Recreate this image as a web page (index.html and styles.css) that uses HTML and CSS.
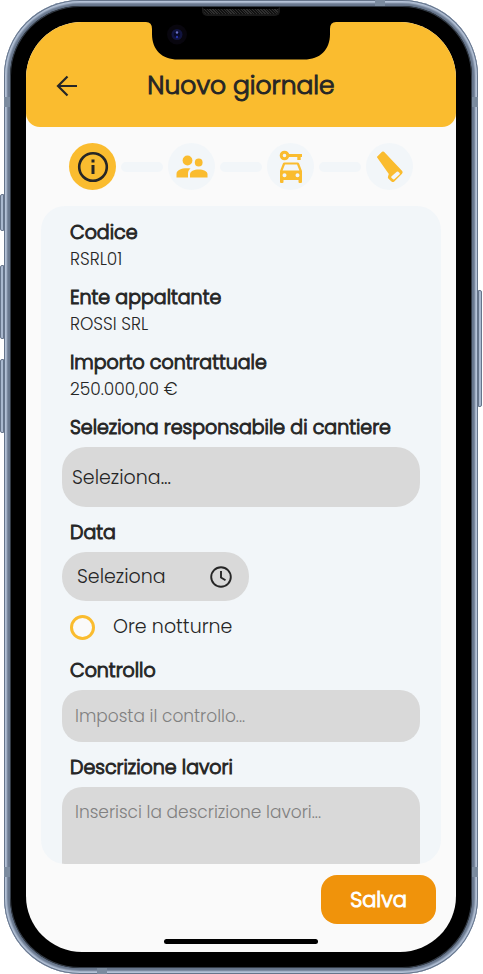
FILE: index.html
```html
<!DOCTYPE html>
<html lang="it">
<head>
    <meta charset="UTF-8">
    <meta name="viewport" content="width=device-width, initial-scale=1.0">
    <title>Nuovo giornale</title>
    <link rel="stylesheet" href="styles.css">
</head>
<body>
    <div class="phone">
        <span class="side-key mute"></span>
        <span class="side-key volume-up"></span>
        <span class="side-key volume-down"></span>
        <span class="side-key power"></span>
        <span class="band band-top"></span>
        <span class="band band-bottom"></span>
        <span class="band band-left-top"></span>
        <span class="band band-left-bottom"></span>
        <span class="band band-right-top"></span>
        <span class="band band-right-bottom"></span>

        <div class="bezel">
            <span class="speaker"></span>
            <div class="screen">
                <svg class="notch" width="190" height="38" viewBox="0 0 190 38" aria-hidden="true">
                    <path d="M0 0H190Q184 0 184 7V12C184 28 174 37.500 158 37.500H32C16 37.500 6 28 6 12V7Q6 0 0 0Z" fill="#000"/>
                    <circle cx="31" cy="12.500" r="10" fill="#08060e"/>
                    <circle cx="31" cy="12.500" r="5.500" fill="#11143f"/>
                    <circle cx="31" cy="12.500" r="3" fill="#080b28"/>
                    <circle cx="31" cy="10.500" r="1.200" fill="#6b72c8"/>
                    <circle cx="31" cy="15" r="1.200" fill="#2733a8"/>
                </svg>

                <header class="header">
                    <button class="back" type="button" aria-label="Indietro">
                        <svg width="22" height="22" viewBox="0 0 22 22" fill="none" stroke="#262626" stroke-width="2.200">
                            <path d="M21 11H2M11.500 1.500L2 11L11.500 20.500"/>
                        </svg>
                    </button>
                    <h1 class="title">Nuovo giornale</h1>
                </header>

                <nav class="steps" aria-label="Passaggi">
                    <a class="step active" href="#info" aria-label="Informazioni">
                        <svg width="32" height="32" viewBox="0 0 32 32">
                            <circle cx="16" cy="16" r="13.800" fill="none" stroke="#262626" stroke-width="2.600"/>
                            <path d="M14.500 8.500h3v3h-3zM14.500 14h3v9h-3z" fill="#262626"/>
                        </svg>
                    </a>
                    <span class="line"></span>
                    <a class="step" href="#persone" aria-label="Persone">
                        <svg width="32" height="24" viewBox="0 0 32 24" fill="#fabc2f">
                            <circle cx="11.500" cy="5.500" r="4.900"/>
                            <circle cx="22.700" cy="7.500" r="3.900"/>
                            <path d="M.5 22.500V19C.5 14.500 7 12.700 14.500 13.500C12.400 15 12 17 12 19V22.500Z"/>
                            <path d="M14 22.500V19.500C14 16 18 14.500 22.700 14.500S31.500 16 31.500 19.500V22.500Z"/>
                        </svg>
                    </a>
                    <span class="line"></span>
                    <a class="step" href="#mezzi" aria-label="Mezzi">
                        <svg width="24" height="34" viewBox="0 0 24 34">
                            <g fill="none" stroke="#fabc2f">
                                <circle cx="5.500" cy="5.500" r="3.300" stroke-width="3"/>
                                <path d="M9 5.500H23" stroke-width="3"/>
                                <path d="M20 5V10" stroke-width="3.400"/>
                            </g>
                            <path fill="#fabc2f" fill-rule="evenodd" d="M5.500 12.500H18.500Q19.700 12.500 20.100 13.600L23 21V32Q23 33 22 33H20.500Q19.500 33 19.500 32V30H4.500V32Q4.500 33 3.500 33H2Q1 33 1 32V21L3.900 13.600Q4.300 12.500 5.500 12.500ZM6 14.500L3.600 20.500H20.400L18 14.500ZM5.500 23.200A2 2 0 1 0 5.500 27.200A2 2 0 1 0 5.500 23.200ZM18.500 23.200A2 2 0 1 0 18.500 27.200A2 2 0 1 0 18.500 23.200Z"/>
                        </svg>
                    </a>
                    <span class="line"></span>
                    <a class="step" href="#attrezzi" aria-label="Attrezzi">
                        <svg width="28" height="32" viewBox="0 0 28 32">
                            <path fill="#fabc2f" fill-rule="evenodd" d="M6 .8L.8 6L12.800 23L12 25.500Q11.500 26.800 12.500 27.800L15.500 30.500Q17 31.700 18.300 30.500L26 22.800Q27.300 21.300 26.200 20L8 .8Q7 0 6 .8ZM22.300 20.700L23.600 22Q24.200 22.800 23.500 23.400L18.300 28.300Q17.500 28.800 16.800 28.100L15.400 26.700Q14.900 26 15.600 25.300L20.800 20.700Q21.600 20.100 22.300 20.700Z"/>
                        </svg>
                    </a>
                </nav>

                <form class="card" id="giornale">
                    <dl class="details">
                        <div>
                            <dt class="label">Codice</dt>
                            <dd class="value">RSRL01</dd>
                        </div>
                        <div>
                            <dt class="label">Ente appaltante</dt>
                            <dd class="value">ROSSI SRL</dd>
                        </div>
                        <div>
                            <dt class="label">Importo contrattuale</dt>
                            <dd class="value">250.000,00 €</dd>
                        </div>
                    </dl>

                    <div class="field">
                        <label class="label" for="responsabile">Seleziona responsabile di cantiere</label>
                        <select class="control select" id="responsabile">
                            <option>Seleziona...</option>
                        </select>
                    </div>

                    <div class="field">
                        <label class="label" for="data">Data</label>
                        <button class="control date" id="data" type="button">
                            Seleziona
                            <svg width="22" height="22" viewBox="0 0 22 22" fill="none" stroke="#262626" stroke-width="1.900">
                                <circle cx="11" cy="11" r="9.800"/>
                                <path d="M11 5V11.500L15.500 14.200"/>
                            </svg>
                        </button>
                    </div>

                    <label class="option">
                        <input class="radio" type="radio" name="notturne">
                        Ore notturne
                    </label>

                    <div class="field">
                        <label class="label" for="controllo">Controllo</label>
                        <input class="control text" id="controllo" type="text" placeholder="Imposta il controllo...">
                    </div>

                    <div class="field">
                        <label class="label" for="descrizione">Descrizione lavori</label>
                        <textarea class="control text area" id="descrizione" placeholder="Inserisci la descrizione lavori..."></textarea>
                    </div>
                </form>

                <footer class="footer">
                    <button class="save" type="submit" form="giornale">Salva</button>
                    <span class="home"></span>
                </footer>
            </div>
        </div>
    </div>
</body>
</html>
```
FILE: styles.css
```css
* {
    box-sizing: border-box;
}
body {
    height: 100vh;
    margin: 0;
    padding: 0 5px 0 4px;
    background-color: #fff;
    font-family: Poppins, Inter, sans-serif;
    font-weight: 300;
    color: #262626;
}
button, input, select, textarea {
    font-family: inherit;
    font-weight: inherit;
    color: inherit;
}

/* phone body */
.phone {
    position: relative;
    height: 100%;
    padding: 6px;
    border-radius: 76px;
    background-color: #a5b4cb;
    box-shadow: inset 0 0 0 1px #66758b, inset 0 0 2px 3px #b9c7dc, inset 0 0 0 6px #66758b;
}
.bezel {
    position: relative;
    height: 100%;
    padding: 16px;
    border-radius: 70px;
    background-color: #000;
    box-shadow: inset 0 0 0 1px #333b46;
}
.screen {
    position: relative;
    display: flex;
    flex-direction: column;
    height: 100%;
    border-radius: 56px;
    background-color: #fafafa;
    overflow: hidden;
}
.side-key {
    position: absolute;
    left: -4px;
    width: 4px;
    border: 1px solid #66758b;
    border-radius: 2px 0 0 2px;
    background-color: #a9b8ce;
}
.mute {
    top: 194px;
    height: 37px;
}
.volume-up {
    top: 265px;
    height: 74px;
}
.volume-down {
    top: 359px;
    height: 74px;
}
.power {
    top: 290px;
    left: auto;
    right: -4px;
    height: 117px;
    border-radius: 0 2px 2px 0;
}
.band {
    position: absolute;
    width: 6px;
    height: 10px;
    background-color: #7b8b9f;
}
.band-top, .band-bottom {
    width: 10px;
    height: 6px;
}
.band-top {
    top: 0;
    right: 93px;
}
.band-bottom {
    bottom: 0;
    left: 93px;
}
.band-left-top {
    top: 97px;
    left: 0;
}
.band-left-bottom {
    bottom: 97px;
    left: 0;
}
.band-right-top {
    top: 97px;
    right: 0;
}
.band-right-bottom {
    bottom: 97px;
    right: 0;
}
.speaker {
    position: absolute;
    top: 1px;
    left: calc(50% - 39px);
    width: 78px;
    height: 9px;
    border: 2px solid #191919;
    border-top-color: #000;
    border-radius: 0 0 5px 5px;
    background: repeating-linear-gradient(45deg, #111 0 1px, #303030 1px 2px);
}
.notch {
    position: absolute;
    top: 0;
    left: calc(50% - 95px);
}

/* header */
.header {
    display: grid;
    grid-template-columns: 22px 1fr 22px;
    align-items: center;
    height: 105px;
    padding: 22px 30px 0;
    border-radius: 0 0 14px 14px;
    background-color: #fabc2f;
}
.back {
    display: flex;
    padding: 0;
    border: none;
    background: none;
    cursor: pointer;
}
.title {
    margin: 0;
    font-size: 25px;
    font-weight: 300;
    line-height: 32px;
    text-align: center;
    -webkit-text-stroke: 1px #262626;
}

/* steps */
.steps {
    display: flex;
    justify-content: center;
    align-items: center;
    gap: 5px;
    padding: 16px 0;
}
.step {
    display: flex;
    justify-content: center;
    align-items: center;
    width: 47px;
    height: 47px;
    border-radius: 50%;
    background-color: #f2f6f9;
}
.step.active {
    background-color: #fabc2f;
}
.line {
    width: 42px;
    height: 10px;
    border-radius: 5px;
    background-color: #f2f6f9;
}

/* form */
.card {
    display: flex;
    flex: 1;
    flex-direction: column;
    gap: 12px;
    min-height: 0;
    margin: 0 15px;
    padding: 13px 21px 0;
    border-radius: 24px;
    background-color: #f2f6f9;
    overflow-y: auto;
    scrollbar-width: none;
}
.details {
    display: flex;
    flex-direction: column;
    gap: 12px;
    margin: 0;
}
.label {
    padding-left: 8px;
    font-size: 19px;
    line-height: 27px;
    -webkit-text-stroke: 1px #262626;
}
.value {
    margin: 0;
    padding-left: 8px;
    font-size: 17px;
    line-height: 26px;
}
.field {
    display: flex;
    flex-direction: column;
    gap: 6px;
}
.control {
    width: 100%;
    border: none;
    border-radius: 20px;
    background-color: #d9d9d9;
    font-size: 19px;
}
.select {
    height: 60px;
    padding: 0 10px;
    border-radius: 24px;
    appearance: none;
}
.date {
    display: flex;
    justify-content: space-between;
    align-items: center;
    width: 187px;
    height: 49px;
    padding: 0 17px 0 15px;
    border-radius: 24px;
    cursor: pointer;
}
.option {
    display: flex;
    align-items: center;
    gap: 18px;
    padding: 0 0 4px 8px;
    font-size: 19px;
    line-height: 28px;
}
.radio {
    width: 25px;
    height: 25px;
    margin: 0;
    border: 3px solid #fabc2f;
    border-radius: 50%;
    background-color: #fafafa;
    appearance: none;
}
.radio:checked {
    box-shadow: inset 0 0 0 4px #fafafa;
    background-color: #fabc2f;
}
.text {
    height: 52px;
    padding: 0 13px;
    font-size: 17px;
}
.text::placeholder {
    color: #808080;
}
.area {
    height: 120px;
    padding: 13px;
    line-height: 24px;
    resize: none;
}

/* footer */
.footer {
    display: flex;
    flex-direction: column;
    gap: 15px;
    padding: 11px 20px 8px;
}
.save {
    align-self: flex-end;
    width: 115px;
    height: 49px;
    border: none;
    border-radius: 16px;
    background-color: #f0930b;
    color: #fff;
    font-size: 21px;
    -webkit-text-stroke: 1px #fff;
    cursor: pointer;
}
.home {
    align-self: center;
    width: 154px;
    height: 5px;
    border-radius: 3px;
    background-color: #000;
}
```
